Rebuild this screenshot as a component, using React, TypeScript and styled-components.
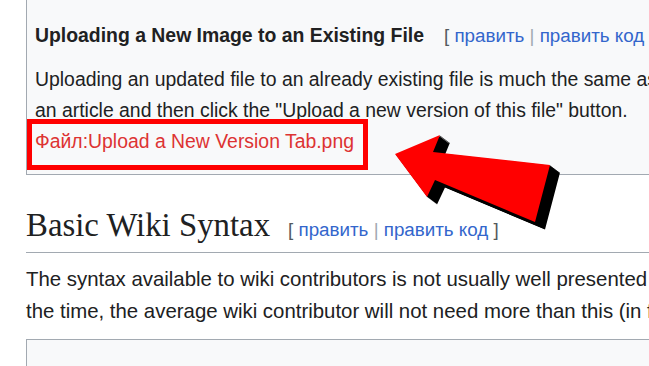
import styled, { createGlobalStyle } from "styled-components";

const GlobalStyle = createGlobalStyle`
  html, body {
    margin: 0;
    background: #ffffff;
  }
  body {
    font-family: "Liberation Sans", Arial, sans-serif;
    color: #202122;
  }
`

const Page = styled.div`
  position: relative;
  width: 649px;
  height: 366px;
  overflow: hidden;
  padding-left: 26px;
  box-sizing: border-box;
  font-size: 20.4px;
`

// grey box round the upload section, text a bit smaller inside
const Panel = styled.div`
  width: 700px;
  background: #f8f9fa;
  border-left: 1px solid #a2a9b1;
  border-bottom: 1px solid #a2a9b1;
  padding: 21px 0 4px 8px;
  font-size: 19.4px;
`

const SubHeading = styled.h3`
  margin: 0;
  font-size: 1em;
  line-height: 28px;
  font-weight: bold;
  white-space: nowrap;
`

const Heading = styled.h2`
  margin: 30px 0 0;
  font-family: "Liberation Serif", Georgia, serif;
  font-weight: normal;
  font-size: 32.8px;
  line-height: 40px;
  padding-bottom: 2px;
  border-bottom: 1px solid #a2a9b1;
  white-space: nowrap;
`

const EditLinks = styled.span<{ $gap: number }>`
  font-family: "Liberation Sans", Arial, sans-serif;
  font-weight: normal;
  font-size: 18.8px;
  color: #54595d;
  margin-left: ${p => p.$gap}px;

  & > a {
    color: #3366cc;
    text-decoration: none;
  }
`

const Sep = styled.span`
  color: #a2a9b1;
`

const Text = styled.p<{ $top: number; $line: number }>`
  margin: ${p => p.$top}px 0 0;
  line-height: ${p => p.$line}px;
  white-space: nowrap;
`

const FileFrame = styled.div`
  display: inline-block;
  margin: -7px 0 0 -8px;
  padding: 2px 9px 8px 3px;
  border: 5px solid #ff0000;
  line-height: 31px;

  & > a {
    color: #dd3333;
    text-decoration: none;
  }
`

const EmptyBox = styled.div`
  margin-top: 12px;
  width: 700px;
  height: 60px;
  background: #f8f9fa;
  border: 1px solid #a2a9b1;
`

const Arrow = styled.svg`
  position: absolute;
  left: 390px;
  top: 125px;
  width: 185px;
  height: 115px;
`

const arrowPoints = "395,154 440,135 433,152 550,165 535,222 435,180 427,197"

function Edit({ gap, closed }: { gap: number; closed?: boolean }) {
    return (
        <EditLinks $gap={gap}>
            [ <a href="#">править</a> <Sep>|</Sep> <a href="#">править код</a>{closed ? " ]" : ""}
        </EditLinks>
    )
}

export default function App() {
    const shadow = [1, 2, 3, 4, 5, 6, 7, 8, 9, 10].map(i => ({ x: i, y: i * 0.75 }))

    return (
        <Page>
            <GlobalStyle/>
            <Panel>
                <SubHeading>
                    Uploading a New Image to an Existing File<Edit gap={20}/>
                </SubHeading>
                <Text $top={14} $line={31}>
                    Uploading an updated file to an already existing file is much the same as uploading a new one. Simply go to the file page in
                    <br/>
                    an article and then click the "Upload a new version of this file" button.
                </Text>
                <FileFrame>
                    <a href="#">Файл:Upload a New Version Tab.png</a>
                </FileFrame>
            </Panel>
            <Heading>
                Basic Wiki Syntax<Edit gap={18} closed/>
            </Heading>
            <Text $top={10} $line={32}>
                The syntax available to wiki contributors is not usually well presented in one place, and most of
                <br/>
                the time, the average wiki contributor will not need more than this (in fact, most of it is rarely used).
            </Text>
            <EmptyBox/>
            <Arrow viewBox="390 125 185 115">
                {shadow.map(s => (
                    <polygon key={s.x} points={arrowPoints} fill="#000" transform={`translate(${s.x} ${s.y})`}/>
                ))}
                <polygon points={arrowPoints} fill="#ff0000"/>
            </Arrow>
        </Page>
    )
}
